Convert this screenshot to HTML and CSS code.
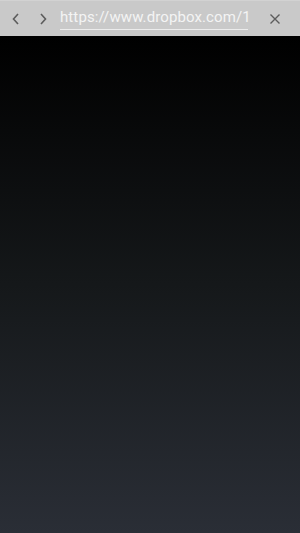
FILE: index.html
```html
<!DOCTYPE html>
<html lang="en">
<head>
    <meta charset="UTF-8">
    <meta name="viewport" content="width=device-width, initial-scale=1.0">
    <title>Dropbox</title>
    <link rel="stylesheet" href="styles.css">
</head>
<body>
    <div class="browser-bar">
        <button class="bar-button" aria-label="Back">
            <svg width="10" height="14" viewBox="0 0 10 14"><path d="M7 2 L2.5 7 L7 12" fill="none" stroke="#5c5c5c" stroke-width="1.6"/></svg>
        </button>
        <button class="bar-button" aria-label="Forward">
            <svg width="10" height="14" viewBox="0 0 10 14"><path d="M3 2 L7.5 7 L3 12" fill="none" stroke="#5c5c5c" stroke-width="1.6"/></svg>
        </button>
        <div class="url-field">
            <span class="url-text">https://www.dropbox.com/1</span>
        </div>
        <button class="bar-button close" aria-label="Close">
            <svg width="12" height="12" viewBox="0 0 12 12"><path d="M1.5 1.5 L10.5 10.5 M10.5 1.5 L1.5 10.5" fill="none" stroke="#5c5c5c" stroke-width="1.4"/></svg>
        </button>
    </div>
    <div class="page-content"></div>
</body>
</html>
```

FILE: styles.css
```css
:root {
    --bar-bg: #c9c9c9;
    --icon-color: #5c5c5c;
    --url-color: #f4f4f4;
    --page-top: #000000;
    --page-bottom: #2a2e36;
}

html, body {
    margin: 0;
    padding: 0;
    height: 100%;
}

body {
    display: flex;
    flex-direction: column;
    font-family: Roboto, 'Noto Sans', sans-serif;
    background-color: var(--page-top);
}

.browser-bar {
    display: flex;
    align-items: center;
    height: 36px;
    padding: 0 13px 0 4px;
    background-color: var(--bar-bg);
    border-top: 1px solid #d2d2d2;
    box-sizing: border-box;
}

.bar-button {
    display: flex;
    align-items: center;
    justify-content: center;
    width: 24px;
    height: 30px;
    padding: 0;
    margin-right: 3px;
    background: none;
    border: none;
}

.url-field {
    flex: 1;
    min-width: 0;
    margin: 0 15px 0 2px;
    padding-bottom: 2px;
    border-bottom: 1px solid #ececec;
}

.url-text {
    display: block;
    white-space: nowrap;
    color: var(--url-color);
    font-size: 15px;
    line-height: 20px;
    letter-spacing: 0.1px;
}

.close {
    width: 24px;
    margin-right: 0;
}

.page-content {
    flex: 1;
    background: linear-gradient(to bottom, var(--page-top) 0%, #15181a 50%, var(--page-bottom) 100%);
}
```
